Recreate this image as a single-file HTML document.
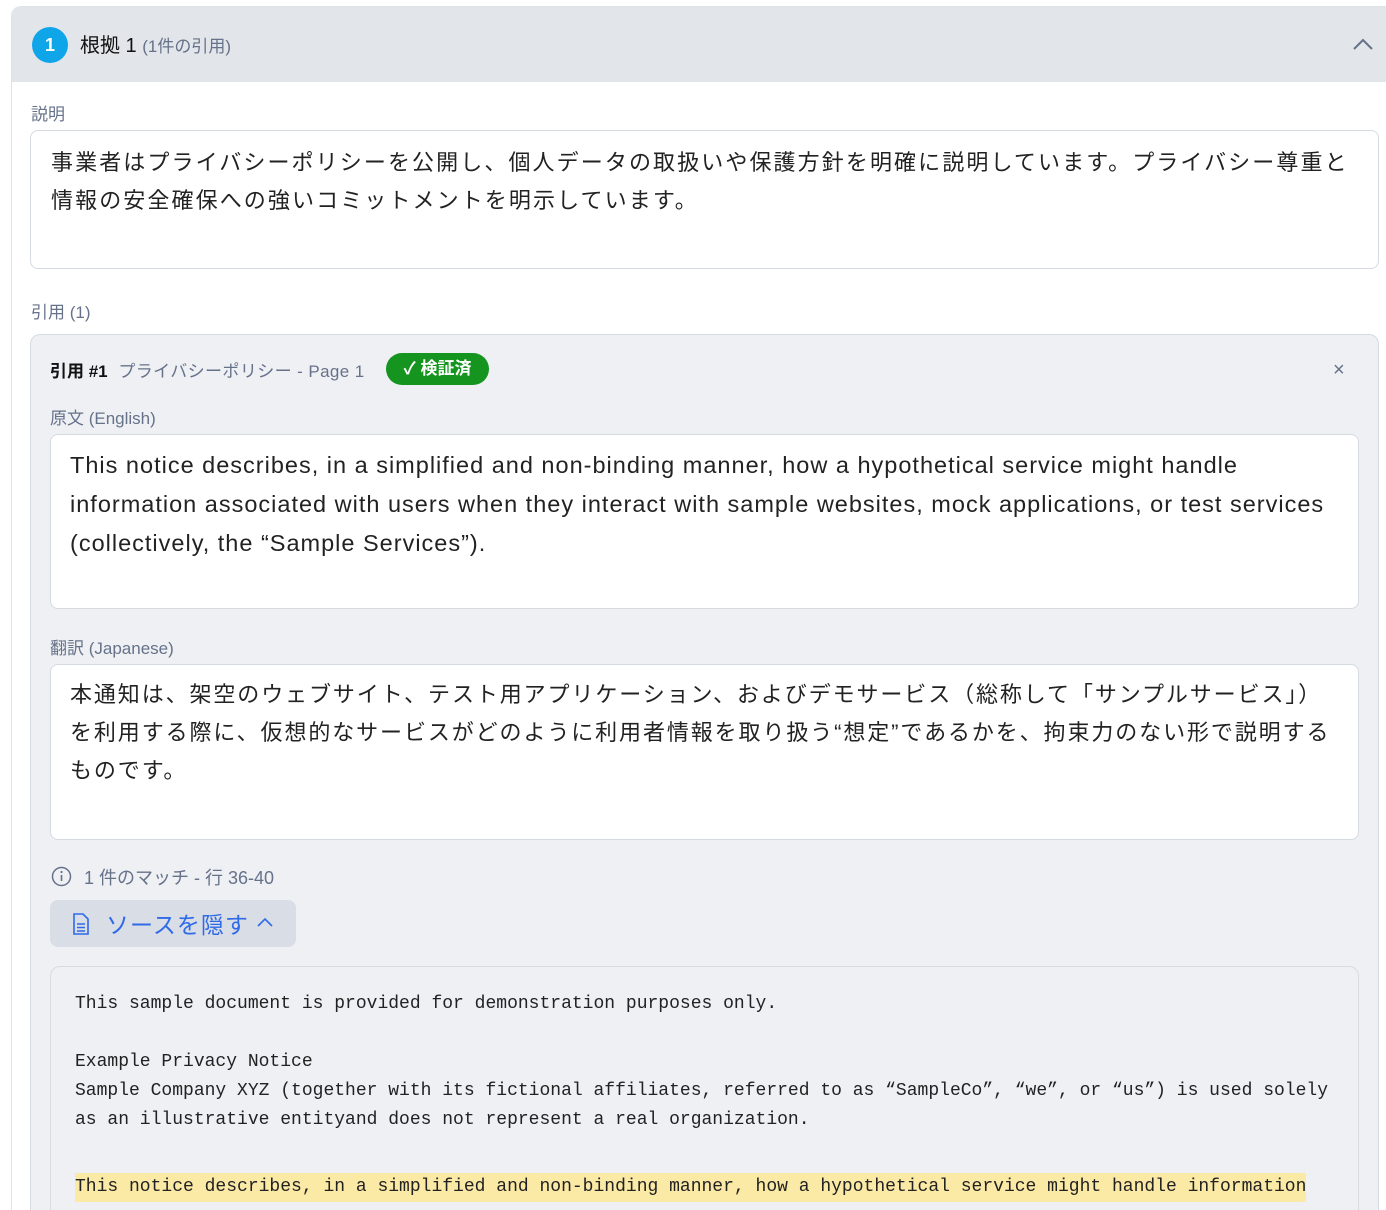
<!DOCTYPE html>
<html style="height:1210px;overflow:hidden"><head><meta charset="utf-8"><style>
*{box-sizing:border-box;margin:0;padding:0}
body{width:1386px;height:1210px;overflow:hidden;background:#fff;font-family:"Liberation Sans","Noto Sans CJK JP",sans-serif;position:relative}
.a{position:absolute}
.outer{left:11px;top:6px;width:1375px;height:1204px;border:1px solid #dfe2e7;border-bottom:none;border-right:none;border-radius:10px 0 0 0;background:#fff;overflow:hidden}
.hdr{left:0;top:0;width:100%;height:75px;background:#e2e5ea}
.lbl{color:#66728a;font-size:17px}
.box{background:#fff;border:1px solid #d6dae1;border-radius:8px;white-space:nowrap}
.mono{font-family:"Liberation Mono",monospace;font-size:18px;color:#222;white-space:pre;line-height:29px}
</style></head><body>
<div class="a outer">
 <div class="a hdr"></div>
 <div class="a" style="left:20px;top:20px;width:36px;height:36px;border-radius:50%;background:#0ea5e9;color:#fff;font-size:18px;font-weight:bold;text-align:center;line-height:36px">1</div>
 <div class="a" style="left:68px;top:22px;font-size:20px;color:#111">根拠 1 <span style="font-size:17px;color:#66728a">(1件の引用)</span></div>
 <svg class="a" style="left:1340px;top:30px" width="22" height="14" viewBox="0 0 22 14"><path d="M2 12L11 3L20 12" fill="none" stroke="#66728a" stroke-width="2"/></svg>
</div>
<div class="a lbl" style="left:31px;top:100px">説明</div>
<div class="a box" style="left:30px;top:130px;width:1349px;height:139px;padding:13px 20px;font-size:22px;line-height:38px;color:#222;letter-spacing:2.1px">事業者はプライバシーポリシーを公開し、個人データの取扱いや保護方針を明確に説明しています。プライバシー尊重と<br>情報の安全確保への強いコミットメントを明示しています。</div>
<div class="a lbl" style="left:31px;top:298px">引用 (1)</div>
<div class="a" style="left:30px;top:334px;width:1349px;height:876px;background:#eef0f4;border:1px solid #d6dae1;border-bottom:none;border-radius:10px 10px 0 0"></div>
<div class="a" style="left:50px;top:357px;font-size:17px;color:#111;font-weight:bold">引用 #1 <span style="font-weight:normal;color:#66728a;margin-left:6px;letter-spacing:0.4px">プライバシーポリシー - Page 1</span></div>
<div class="a" style="left:386px;top:353px;width:103px;height:32px;border-radius:16px;background:#15951f;color:#fff;font-size:17px;font-weight:bold;text-align:center;line-height:32px">✓ 検証済</div>
<div class="a" style="left:1333px;top:359px;font-size:20px;color:#66728a">×</div>
<div class="a lbl" style="left:50px;top:404px">原文 (English)</div>
<div class="a box" style="left:50px;top:434px;width:1309px;height:175px;padding:11px 19px;font-size:23.5px;line-height:39px;color:#222;letter-spacing:1px">This notice describes, in a simplified and non-binding manner, how a hypothetical service might handle<br>information associated with users when they interact with sample websites, mock applications, or test services<br>(collectively, the “Sample Services”).</div>
<div class="a lbl" style="left:50px;top:634px">翻訳 (Japanese)</div>
<div class="a box" style="left:50px;top:664px;width:1309px;height:176px;padding:11px 19px;font-size:22px;line-height:38px;color:#222;letter-spacing:1.9px">本通知は、架空のウェブサイト、テスト用アプリケーション、およびデモサービス（総称して「サンプルサービス」）<br>を利用する際に、仮想的なサービスがどのように利用者情報を取り扱う“想定”であるかを、拘束力のない形で説明する<br>ものです。</div>
<svg class="a" style="left:51px;top:866px" width="21" height="21" viewBox="0 0 21 21"><circle cx="10.5" cy="10.5" r="9" fill="none" stroke="#66728a" stroke-width="1.5"/><path d="M10.5 9v6" stroke="#66728a" stroke-width="1.6"/><circle cx="10.5" cy="6" r="1.1" fill="#66728a"/></svg>
<div class="a lbl" style="left:84px;top:864px;font-size:18px">1 件のマッチ - 行 36-40</div>
<div class="a" style="left:50px;top:900px;width:246px;height:47px;border-radius:8px;background:#d9dde5"></div>
<svg class="a" style="left:72px;top:912px" width="18" height="24" viewBox="0 0 18 24"><path d="M2 2h9l5 5v15H2z M5 12h8 M5 15.5h8 M5 19h8" fill="none" stroke="#2f6ae8" stroke-width="1.6"/></svg>
<div class="a" style="left:106px;top:906px;font-size:23px;color:#2f6ae8;letter-spacing:1px">ソースを隠す</div>
<svg class="a" style="left:256px;top:916px" width="18" height="12" viewBox="0 0 18 12"><path d="M2 10L9 3L16 10" fill="none" stroke="#2f6ae8" stroke-width="1.6"/></svg>
<div class="a" style="left:50px;top:966px;width:1309px;height:244px;background:#eff0f4;border:1px solid #d6dae1;border-bottom:none;border-radius:10px 10px 0 0"></div>
<div class="a mono" style="left:75px;top:990px">This sample document is provided for demonstration purposes only.

Example Privacy Notice
Sample Company XYZ (together with its fictional affiliates, referred to as “SampleCo”, “we”, or “us”) is used solely
as an illustrative entityand does not represent a real organization.</div>
<div class="a mono" style="left:75px;top:1173px;background:#fbe9a6">This notice describes, in a simplified and non-binding manner, how a hypothetical service might handle information</div>
</body></html>
